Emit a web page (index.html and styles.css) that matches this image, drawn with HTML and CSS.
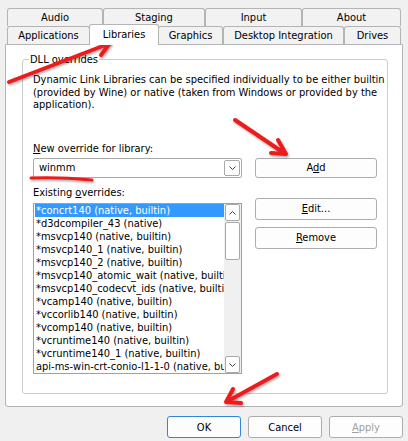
FILE: index.html
```html
<!DOCTYPE html>
<html lang="en">
<head>
<meta charset="utf-8">
<title>Wine configuration - Libraries</title>
<link rel="stylesheet" href="styles.css">
</head>
<body>
<div class="win">
  <div class="tabs">
    <div class="tabrow row1">
      <div class="tab">Audio</div>
      <div class="tab">Staging</div>
      <div class="tab">Input</div>
      <div class="tab">About</div>
    </div>
    <div class="tabrow row2">
      <div class="tab">Applications</div>
      <div class="tab sel">Libraries</div>
      <div class="tab">Graphics</div>
      <div class="tab">Desktop Integration</div>
      <div class="tab">Drives</div>
    </div>
  </div>

  <div class="pane">
    <div class="group">
      <div class="group-title">DLL overrides</div>
      <div class="group-body">
        <p class="desc">Dynamic Link Libraries can be specified individually to be either builtin<br>(provided by Wine) or native (taken from Windows or provided by the<br>application).</p>

        <div class="lbl lbl1"><u>N</u>ew override for library:</div>

        <div class="combo">
          <span class="combo-text">winmm</span>
          <span class="drop"><svg width="7" height="4" viewBox="0 0 7 4"><polyline points="0.5,0.5 3.5,3.5 6.5,0.5" fill="none" stroke="#404040" stroke-width="1"/></svg></span>
        </div>
        <button class="btn add">A<u>d</u>d</button>

        <div class="lbl lbl2">Existing <u>o</u>verrides:</div>

        <div class="list">
          <div class="items">
            <div class="item on">*concrt140 (native, builtin)</div>
            <div class="item">*d3dcompiler_43 (native)</div>
            <div class="item">*msvcp140 (native, builtin)</div>
            <div class="item">*msvcp140_1 (native, builtin)</div>
            <div class="item">*msvcp140_2 (native, builtin)</div>
            <div class="item">*msvcp140_atomic_wait (native, builtin)</div>
            <div class="item">*msvcp140_codecvt_ids (native, builtin)</div>
            <div class="item">*vcamp140 (native, builtin)</div>
            <div class="item">*vccorlib140 (native, builtin)</div>
            <div class="item">*vcomp140 (native, builtin)</div>
            <div class="item">*vcruntime140 (native, builtin)</div>
            <div class="item">*vcruntime140_1 (native, builtin)</div>
            <div class="item">api-ms-win-crt-conio-l1-1-0 (native, builtin)</div>
          </div>
          <div class="vscroll">
            <div class="sbtn"><svg width="7" height="4" viewBox="0 0 7 4"><polyline points="0.5,3.5 3.5,0.5 6.5,3.5" fill="none" stroke="#404040" stroke-width="1"/></svg></div>
            <div class="thumb"></div>
            <div class="track"></div>
            <div class="sbtn"><svg width="7" height="4" viewBox="0 0 7 4"><polyline points="0.5,0.5 3.5,3.5 6.5,0.5" fill="none" stroke="#404040" stroke-width="1"/></svg></div>
          </div>
        </div>

        <div class="side">
          <button class="btn tall"><u>E</u>dit...</button>
          <button class="btn tall"><u>R</u>emove</button>
        </div>
      </div>
    </div>
  </div>

  <div class="footer">
    <button class="btn tall foot ok">OK</button>
    <button class="btn tall foot">Cancel</button>
    <button class="btn tall foot dis"><u>A</u>pply</button>
  </div>

  <svg class="annot" width="408" height="441" viewBox="0 0 408 441">
    <defs>
      <filter id="sh" x="-20%" y="-20%" width="140%" height="140%">
        <feDropShadow dx="1" dy="1.5" stdDeviation="1" flood-color="#000" flood-opacity="0.35"/>
      </filter>
    </defs>
    <g fill="none" stroke="#ec1c1c" stroke-width="4" stroke-linecap="round" stroke-linejoin="round" filter="url(#sh)">
      <line x1="9" y1="82" x2="108" y2="44"/>
      <polyline points="95,41 110,43 101,55"/>
      <line x1="235" y1="120" x2="284" y2="153"/>
      <polyline points="278,140 286,154 271,153"/>
      <line x1="277" y1="374" x2="228" y2="401"/>
      <polyline points="233,389 226,402 241,403"/>
      <path d="M31 178 Q60 177 92 180" stroke-width="3"/>
    </g>
  </svg>
</div>
</body>
</html>
```

FILE: styles.css
```css
html, body {
  margin: 0;
  padding: 0;
}

body {
  background: #f0f0f0;
  font-family: "DejaVu Sans Condensed", "DejaVu Sans", sans-serif;
  font-stretch: condensed;
  font-size: 11px;
  color: #000;
}

.win {
  position: relative;
  width: 408px;
  height: 441px;
  overflow: hidden;
}

/* ---------- tabs ---------- */
.tabs {
  margin: 8px 0 0 7px;
  width: 394px;
}

.tabrow {
  display: grid;
  height: 18px;
}

.row1 {
  grid-template-columns: 96px 102px 97px 99px;
}

.row2 {
  grid-template-columns: 83px 68px 65px 121px 57px;
}

.tab {
  display: flex;
  align-items: center;
  justify-content: center;
  background: #f2f2f2;
  border: 1px solid #b4b4b4;
  border-bottom: none;
  border-radius: 3px 3px 0 0;
  line-height: 13px;
  white-space: nowrap;
}

.tab.sel {
  background: #fff;
  margin: -2px -1px -1px -1px;
  z-index: 1;
  padding-bottom: 1px;
}

/* ---------- pane ---------- */
.pane {
  margin-left: 5px;
  width: 398px;
  height: 363px;
  box-sizing: border-box;
  background: #fff;
  border: 1px solid #b4b4b4;
  border-radius: 0 0 3px 3px;
  padding: 14px 14px 0 16px;
}

.group {
  border: 1px solid #cccccc;
  border-radius: 3px;
  height: 335px;
  box-sizing: border-box;
}

.group-title {
  display: table;
  margin: -7px 0 0 6px;
  padding: 0 1px;
  background: #fff;
  line-height: 13px;
}

.group-body {
  display: grid;
  grid-template-columns: 209px 122px;
  column-gap: 13px;
  align-items: start;
  padding: 8px 10px 0 10px;
}

.desc {
  grid-column: 1 / -1;
  margin: 0;
  line-height: 12.5px;
  white-space: nowrap;
}

.lbl {
  grid-column: 1;
  line-height: 13px;
  white-space: nowrap;
}

.lbl1 {
  margin-top: 30px;
}

.lbl2 {
  margin-top: 8px;
}

u {
  text-decoration: underline;
  text-underline-offset: 1px;
}

/* ---------- combo ---------- */
.combo {
  grid-column: 1;
  margin-top: 3px;
  height: 20px;
  box-sizing: border-box;
  border: 1px solid #a9a9a9;
  border-radius: 2px;
  background: #fff;
  display: flex;
  align-items: center;
  justify-content: space-between;
}

.combo-text {
  padding-left: 5px;
}

.drop {
  width: 16px;
  height: 16px;
  box-sizing: border-box;
  margin-right: 1px;
  border: 1px solid #a9a9a9;
  border-radius: 2px;
  display: flex;
  align-items: center;
  justify-content: center;
  background: #fff;
}

/* ---------- buttons ---------- */
.btn {
  font: inherit;
  color: #000;
  background: #fdfdfd;
  border: 1px solid #adadad;
  border-radius: 3px;
  padding: 0;
  height: 20px;
  box-sizing: border-box;
  line-height: 13px;
}

.btn.tall {
  height: 22px;
}

.add {
  grid-column: 2;
  margin-top: 3px;
}

.side {
  grid-column: 2;
  display: flex;
  flex-direction: column;
  gap: 7px;
  margin-top: -1px;
}

/* ---------- list ---------- */
.list {
  grid-column: 1;
  margin-top: 4.5px;
  height: 171px;
  box-sizing: border-box;
  border: 1px solid #a0a0a0;
  background: #fff;
  display: flex;
}

.items {
  width: 190px;
  padding-left: 1px;
  box-sizing: border-box;
  overflow: hidden;
}

.item {
  height: 13px;
  line-height: 13px;
  padding-left: 1px;
  white-space: nowrap;
}

.item.on {
  background: #3399ff;
  color: #fff;
}

.vscroll {
  width: 17px;
  background: #f0f0f0;
  display: flex;
  flex-direction: column;
  padding: 0 1px;
  box-sizing: border-box;
}

.sbtn {
  height: 17px;
  box-sizing: border-box;
  border: 1px solid #a9a9a9;
  border-radius: 2px;
  background: #fff;
  display: flex;
  align-items: center;
  justify-content: center;
}

.thumb {
  height: 38px;
  margin-top: 1px;
  box-sizing: border-box;
  border: 1px solid #a9a9a9;
  border-radius: 2px;
  background: #fff;
}

.track {
  flex: 1;
}

/* ---------- footer ---------- */
.footer {
  display: flex;
  justify-content: flex-end;
  gap: 7px;
  padding-right: 5px;
  margin-top: 9px;
}

.foot {
  width: 74px;
}

.ok {
  border-color: #2f86dc;
}

.dis {
  color: #a0a0a0;
}

/* ---------- annotation overlay ---------- */
.annot {
  position: absolute;
  left: 0;
  top: 0;
  pointer-events: none;
}
```
